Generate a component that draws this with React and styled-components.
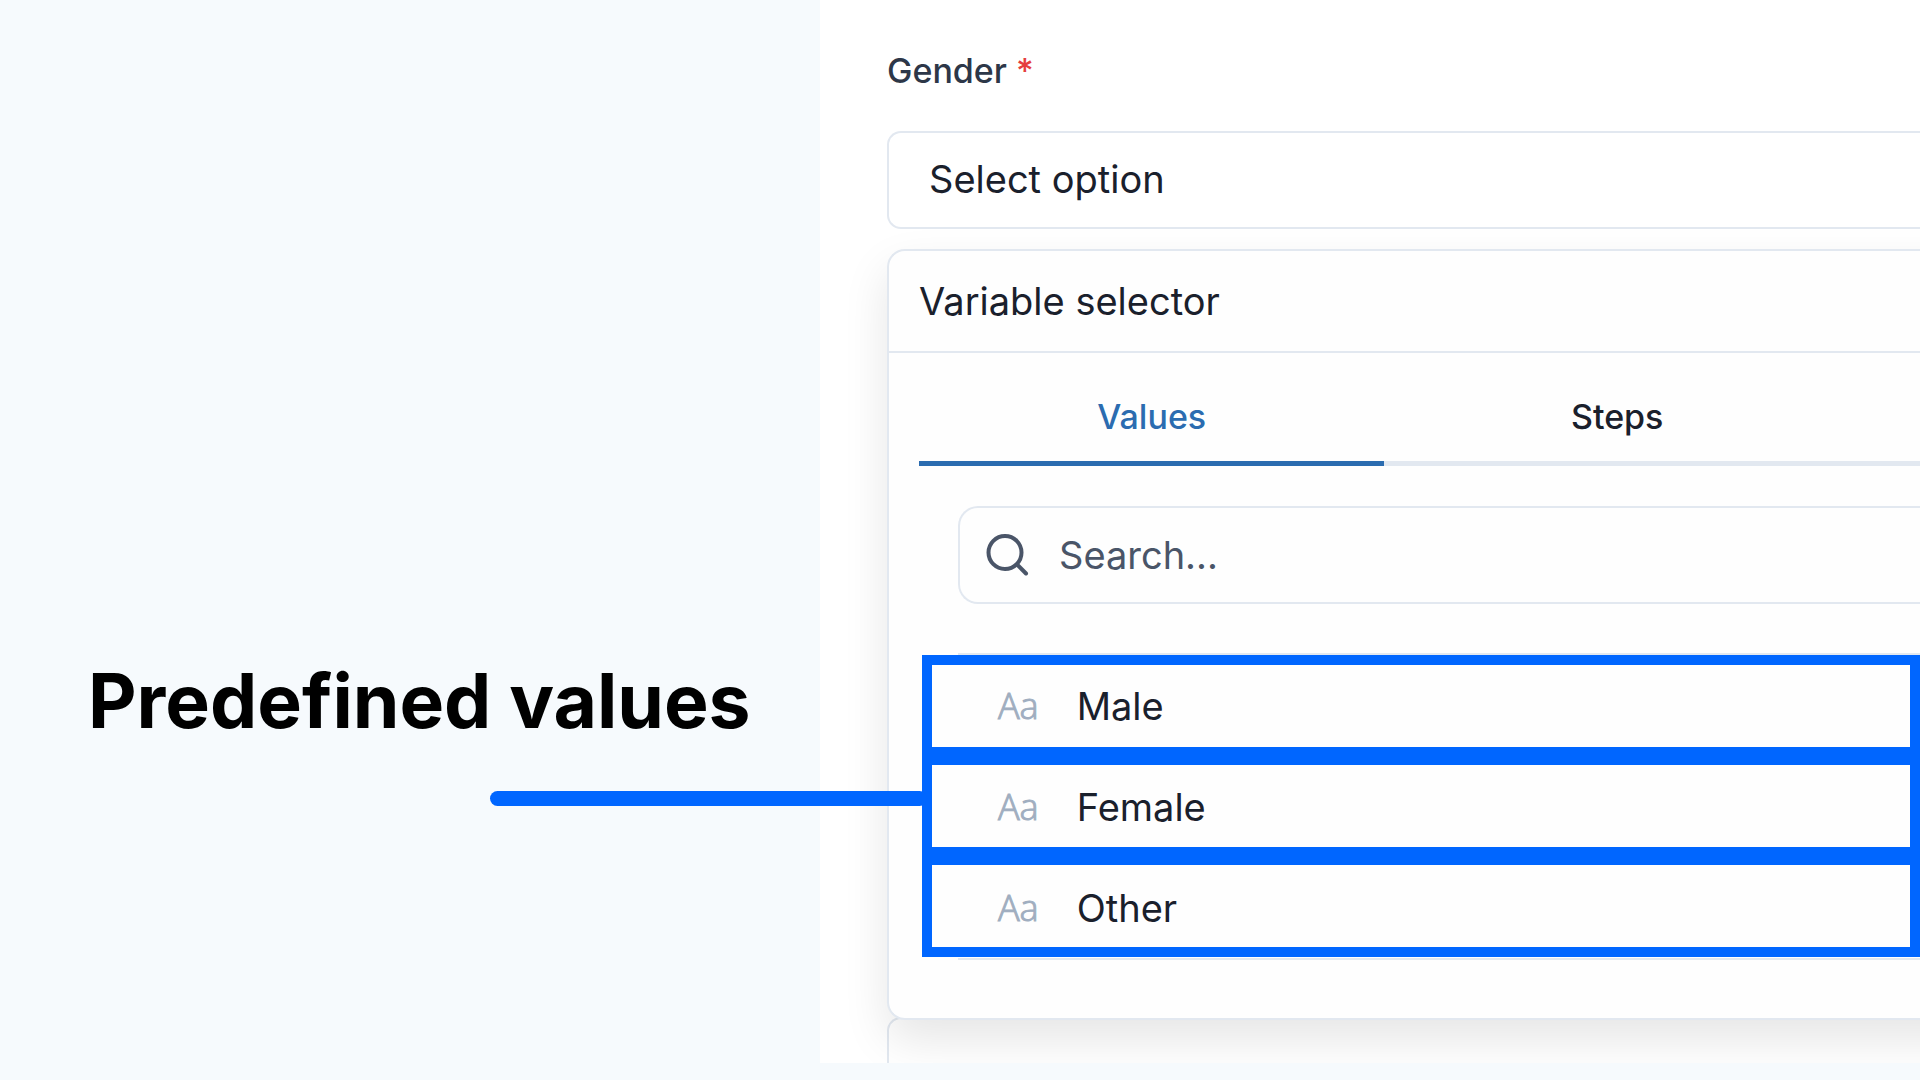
import React, { useState } from 'react'
import styled, { createGlobalStyle } from 'styled-components';


const GlobalStyle = createGlobalStyle`
    *, *::before, *::after {
        box-sizing: border-box;
    }

    body {
        margin: 0;
        background: #f6fafd;
        font-family: Inter, "Liberation Sans", sans-serif;
        color: #1a202c;
    }

    button, input, select {
        font: inherit;
        color: inherit;
    }
`;

const Page = styled.main`
    display: grid;
    grid-template-columns: 41fr 55fr;
    min-height: 100vh;
    padding-bottom: 17px;
    overflow: hidden;
    background: #f6fafd;
`;

const Caption = styled.section`
    padding: 655px 0 0 88px;
`;

const CaptionTitle = styled.h1`
    margin: 0;
    font-size: 75px;
    font-weight: 700;
    line-height: 92px;
    color: #000;
    white-space: nowrap;
`;

const FormPanel = styled.section`
    display: flex;
    flex-direction: column;
    min-width: 0;
    padding: 51px 0 0 67px;
    background: #fff;
    overflow-y: clip;
`;

const FieldLabel = styled.label`
    font-size: 34px;
    font-weight: 500;
    line-height: 40px;
    color: #2d3748;
`;

const Required = styled.span`
    color: #e53e3e;
`;

const SelectBox = styled.select`
    appearance: none;
    width: 100%;
    height: 98px;
    margin: 40px 0 20px;
    padding: 0 40px 2px;
    border: 2px solid #e2e8f0;
    border-right: 0;
    border-radius: 14px 0 0 14px;
    background: #fff;
    font-size: 38px;
`;

// runs past the right edge so that its shadow stays even there
const Popover = styled.div`
    position: relative;
    z-index: 1;
    margin-right: -60px;
    padding-right: 60px;
    border: 2px solid #e2e8f0;
    border-right: 0;
    border-radius: 18px 0 0 18px;
    background: #fefefe;
    box-shadow: 0 20px 46px rgba(0, 0, 0, 0.1);
`;

const PopoverTitle = styled.h2`
    margin: 0;
    padding: 26px 30px;
    border-bottom: 2px solid #e2e8f0;
    font-size: 38px;
    font-weight: 400;
    line-height: 48px;
`;

const TabList = styled.div`
    display: flex;
    margin: 8px 0 40px 30px;
    box-shadow: inset 0 -5px #e2e8f0;
`;

const Tab = styled.button`
    flex: 0 0 46.5%;
    padding: 36px 0 24px;
    border: 0;
    border-bottom: 5px solid ${(props) => (props.$active ? '#2b6cb0' : 'transparent')};
    background: none;
    font-size: 34px;
    font-weight: 500;
    line-height: 40px;
    color: ${(props) => (props.$active ? '#2b6cb0' : '#1a202c')};
`;

const TabBody = styled.div`
    padding: 0 0 58px 69px;
`;

const SearchBox = styled.label`
    display: flex;
    align-items: center;
    gap: 27px;
    height: 98px;
    margin-bottom: 49px;
    padding-left: 24px;
    border: 2px solid #e2e8f0;
    border-right: 0;
    border-radius: 20px 0 0 20px;
    color: #4a5568;
`;

const SearchInput = styled.input`
    flex: 1;
    min-width: 0;
    padding: 0;
    border: 0;
    outline: 0;
    background: none;
    font-size: 38px;

    &::placeholder {
        color: #4a5568;
        opacity: 1;
    }
`;

const ValueList = styled.div`
    position: relative;
    border: solid #e2e8f0;
    border-width: 2px 0;
`;

const ValueRow = styled.button`
    display: flex;
    align-items: center;
    gap: 38px;
    width: 100%;
    height: 101px;
    padding: 0 40px;
    border: 0;
    background: none;
    font-size: 38px;
    text-align: left;
`;

const TypeMark = styled.span`
    font-family: "Open Sans", "Noto Sans", sans-serif;
    font-size: 36px;
    font-weight: 300;
    color: #a0aec0;
    -webkit-text-stroke: 1px #a0aec0;
`;

// blue callout frames drawn over the list
const Callout = styled.div`
    position: absolute;
    top: 0;
    right: 0;
    left: -36px;
    pointer-events: none;
`;

const Frame = styled.div`
    height: 102px;
    margin-bottom: -2px;
    border: 10px solid #0066ff;
`;

const Connector = styled.div`
    position: absolute;
    top: 136px;
    right: calc(100% - 5px);
    width: 437px;
    height: 15px;
    border-radius: 8px;
    background: #0066ff;
`;

const NextField = styled.div`
    flex: 1;
    margin-top: -3px;
    border: 2px solid #e2e8f0;
    border-width: 2px 0 0 2px;
    border-radius: 14px 0 0 0;
`;

const TABS = ['Values', 'Steps'];
const VALUES = ['Male', 'Female', 'Other'];

function SearchIcon() {
    return (
        <svg width="48" height="48" viewBox="0 0 48 48" fill="none" stroke="currentColor" strokeWidth="4" strokeLinecap="round" aria-hidden="true">
            <circle cx="21" cy="21.5" r="16.5" />
            <path d="M33 33.5l9 9" />
        </svg>
    )
}

export default function App() {
    const [tab, setTab] = useState('Values');
    const [gender, setGender] = useState('');

    return (
        <>
            <GlobalStyle />
            <Page>
                <Caption>
                    <CaptionTitle>Predefined values</CaptionTitle>
                </Caption>

                <FormPanel>
                    <FieldLabel htmlFor="gender">
                        Gender <Required>*</Required>
                    </FieldLabel>
                    <SelectBox id="gender" value={gender} onChange={(e) => setGender(e.target.value)}>
                        <option value="">Select option</option>
                        {VALUES.map((value) => <option key={value}>{value}</option>)}
                    </SelectBox>

                    <Popover>
                        <PopoverTitle>Variable selector</PopoverTitle>
                        <TabList role="tablist">
                            {TABS.map((name) => (
                                <Tab key={name} role="tab" aria-selected={tab === name} $active={tab === name} onClick={() => setTab(name)}>
                                    {name}
                                </Tab>
                            ))}
                        </TabList>
                        <TabBody>
                            <SearchBox>
                                <SearchIcon />
                                <SearchInput type="text" placeholder="Search..." aria-label="Search" />
                            </SearchBox>
                            <ValueList>
                                {VALUES.map((value) => (
                                    <ValueRow key={value} onClick={() => setGender(value)}>
                                        <TypeMark>Aa</TypeMark>
                                        {value}
                                    </ValueRow>
                                ))}
                                <Callout>
                                    {VALUES.map((value) => <Frame key={value} />)}
                                    <Connector />
                                </Callout>
                            </ValueList>
                        </TabBody>
                    </Popover>
                    <NextField />
                </FormPanel>
            </Page>
        </>
    )
}
